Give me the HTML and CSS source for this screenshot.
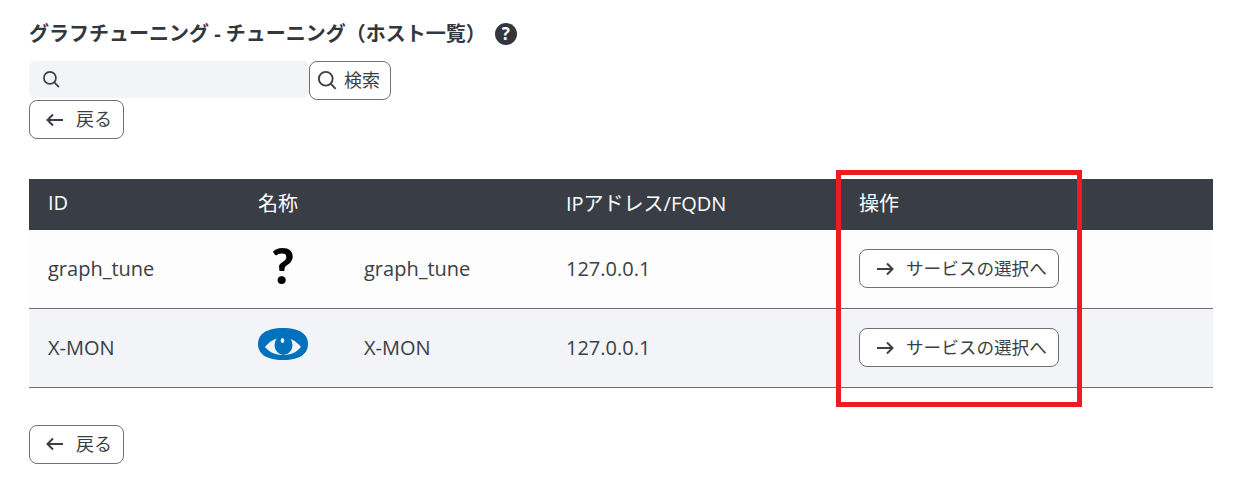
FILE: index.html
```html
<!DOCTYPE html>
<html lang="ja">
<head>
    <meta charset="UTF-8">
    <title>グラフチューニング</title>
    <link rel="stylesheet" href="styles.css">
</head>
<body>
    <div class="page">
        <h1 class="title">
            <span class="title-text">グラフチューニング - チューニング（ホスト一覧）</span>
            <span class="help">?</span>
        </h1>

        <div class="search-row">
            <div class="search-box">
                <svg class="icon-search" width="19" height="19" viewBox="0 0 18 18"><circle cx="7.5" cy="7.5" r="5.7"/><path d="M11.7 11.7l4.3 4.5"/></svg>
            </div>
            <button class="btn btn-search">
                <svg class="icon-search" width="21" height="21" viewBox="0 0 18 18"><circle cx="7.5" cy="7.5" r="5.9"/><path d="M11.7 11.7l4.3 4.5"/></svg>
                <span class="btn-label">検索</span>
            </button>
        </div>

        <button class="btn btn-back">
            <svg class="arrow" width="18" height="14" viewBox="0 0 18 14"><path d="M17 7H1.5M7 1.5L1.5 7L7 12.5"/></svg>
            <span class="btn-label">戻る</span>
        </button>

        <table class="hosts">
            <colgroup>
                <col class="col-id">
                <col class="col-icon">
                <col class="col-name">
                <col class="col-ip">
                <col>
            </colgroup>
            <thead>
                <tr>
                    <th>ID</th>
                    <th colspan="2">名称</th>
                    <th>IPアドレス/FQDN</th>
                    <th>操作</th>
                </tr>
            </thead>
            <tbody>
                <tr>
                    <td>graph_tune</td>
                    <td>
                        <span class="host-icon unknown">?</span>
                    </td>
                    <td>graph_tune</td>
                    <td>127.0.0.1</td>
                    <td>
                        <button class="btn btn-next">
                            <svg class="arrow" width="18" height="14" viewBox="0 0 18 14"><path d="M1 7H16.5M11 1.5L16.5 7L11 12.5"/></svg>
                            <span class="btn-label">サービスの選択へ</span>
                        </button>
                    </td>
                </tr>
                <tr>
                    <td>X-MON</td>
                    <td>
                        <svg class="host-icon" width="50" height="36" viewBox="0 0 50 36">
                            <path d="M25 1C43 1 50 8 50 17S43 33 25 33S0 26 0 17S7 1 25 1Z" fill="#0071bc"/>
                            <path d="M7 20C12 14 18 10.5 25 10.5S38 14 43 20C38 26 32 28 25 28S12 26 7 20Z" fill="#f2f4f8"/>
                            <ellipse cx="25.5" cy="18" rx="9" ry="10" fill="#0071bc"/>
                            <ellipse cx="24.5" cy="13.5" rx="1.8" ry="2.5" fill="#f2f4f8"/>
                        </svg>
                    </td>
                    <td>X-MON</td>
                    <td>127.0.0.1</td>
                    <td>
                        <button class="btn btn-next">
                            <svg class="arrow" width="18" height="14" viewBox="0 0 18 14"><path d="M1 7H16.5M11 1.5L16.5 7L11 12.5"/></svg>
                            <span class="btn-label">サービスの選択へ</span>
                        </button>
                    </td>
                </tr>
            </tbody>
        </table>

        <button class="btn btn-back btn-bottom">
            <svg class="arrow" width="18" height="14" viewBox="0 0 18 14"><path d="M17 7H1.5M7 1.5L1.5 7L7 12.5"/></svg>
            <span class="btn-label">戻る</span>
        </button>

        <!-- red annotation over the table -->
        <div class="highlight"></div>
    </div>
</body>
</html>
```

FILE: styles.css
```css
* {
    margin: 0;
    padding: 0;
    box-sizing: border-box;
    font-family: "Open Sans", "Noto Sans CJK JP", sans-serif;
}

body {
    background-color: #fff;
    color: #3a3f46;
}

.page {
    position: relative;
    width: 1241px;
    height: 489px;
    padding: 20px 28px 0 29px;
    overflow: hidden;
}

.title {
    display: flex;
    align-items: center;
    gap: 9px;
    height: 26px;
    font-size: 20px;
    font-weight: 700;
    line-height: 26px;
    color: #33373d;
}

.title-text {
    padding-top: 2px;
}

.help {
    display: flex;
    align-items: center;
    justify-content: center;
    width: 22px;
    height: 22px;
    margin-top: 1px;
    border-radius: 50%;
    background: #33373d;
    color: #fff;
    font-size: 17px;
    font-weight: 700;
}

.search-row {
    display: flex;
    align-items: flex-start;
    margin-top: 15px;
}

.search-box {
    display: flex;
    align-items: center;
    width: 280px;
    height: 37px;
    padding-left: 13px;
    background: #f2f4f8;
    border-radius: 6px;
}

.icon-search {
    fill: none;
    stroke: #3a3f46;
    stroke-width: 1.6;
}

.btn {
    display: flex;
    align-items: center;
    height: 39px;
    background: #fff;
    border: 1px solid #707070;
    border-radius: 8px;
    color: #3a3f46;
    font-size: 18px;
    cursor: pointer;
}

.btn-label {
    line-height: 24px;
    margin-top: -1px;
}

.btn-search {
    width: 82px;
    gap: 6px;
    padding-left: 7px;
}

.btn-back {
    width: 95px;
    gap: 12px;
    padding-left: 16px;
}

.btn-next {
    width: 200px;
    gap: 12px;
    padding-left: 16px;
    font-size: 17.6px;
}

.btn-bottom {
    margin-top: 37px;
}

.arrow {
    fill: none;
    stroke: #3a3f46;
    stroke-width: 2;
}

.hosts {
    width: 1184px;
    margin-top: 40px;
    border-collapse: collapse;
    table-layout: fixed;
    font-size: 20px;
}

.col-id { width: 210px; }
.col-icon { width: 106px; }
.col-name { width: 202px; }
.col-ip { width: 293px; }

.hosts th {
    height: 51px;
    padding: 0 0 4px 19px;
    background: #393e46;
    color: #fff;
    font-weight: 400;
    text-align: left;
}

.hosts td {
    height: 79px;
    padding-left: 19px;
    border-bottom: 1px solid #707070;
    background: #fdfdfd;
    vertical-align: middle;
}

.hosts tbody tr:first-child td {
    height: 78px;
}

.hosts tbody tr:nth-child(2) td {
    background: #f2f4f8;
}

.host-icon {
    display: block;
    margin-top: -6px;
}

.unknown {
    width: 50px;
    height: 36px;
    margin-top: -8px;
    font-family: "Lato", sans-serif;
    font-size: 50px;
    font-weight: 900;
    line-height: 36px;
    text-align: center;
    color: #000;
}

.highlight {
    position: absolute;
    left: 836px;
    top: 170px;
    width: 246px;
    height: 237px;
    border: 5px solid #ed1c24;
}
```
